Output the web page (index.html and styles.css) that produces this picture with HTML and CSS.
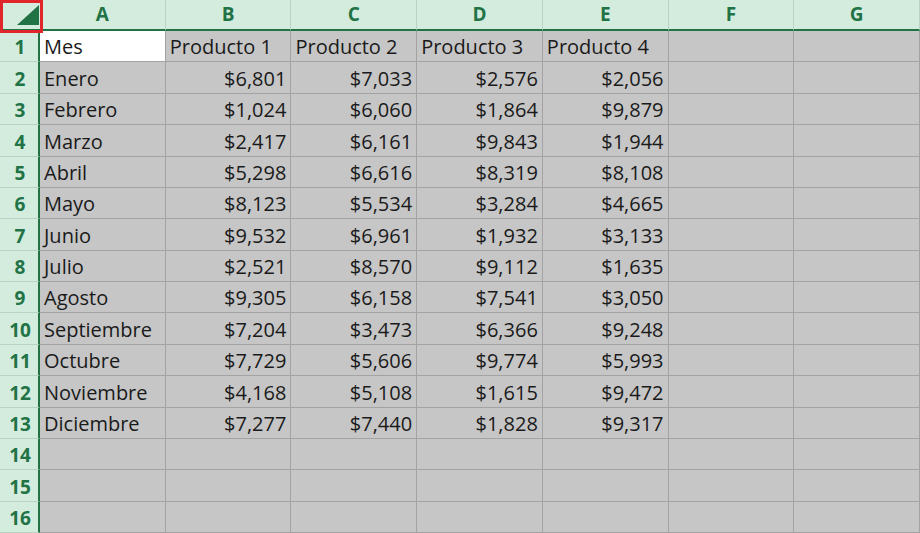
FILE: index.html
```html
<!DOCTYPE html>
<html lang="es">
<head>
<meta charset="utf-8">
<title>Hoja</title>
<link rel="stylesheet" href="styles.css">
</head>
<body>
<div class="sheet">
  <div class="corner">
    <svg class="tri" width="22" height="20" viewBox="0 0 22 20"><polygon points="0,20 22,20 22,0" fill="#217346"/></svg>
  </div>
  <div class="ch">A</div><div class="ch">B</div><div class="ch">C</div><div class="ch">D</div><div class="ch">E</div><div class="ch">F</div><div class="ch">G</div>

  <div class="rh">1</div><div class="c sel">Mes</div><div class="c">Producto 1</div><div class="c">Producto 2</div><div class="c">Producto 3</div><div class="c">Producto 4</div><div class="c"></div><div class="c"></div>
  <div class="rh">2</div><div class="c">Enero</div><div class="c n">$6,801</div><div class="c n">$7,033</div><div class="c n">$2,576</div><div class="c n">$2,056</div><div class="c"></div><div class="c"></div>
  <div class="rh">3</div><div class="c">Febrero</div><div class="c n">$1,024</div><div class="c n">$6,060</div><div class="c n">$1,864</div><div class="c n">$9,879</div><div class="c"></div><div class="c"></div>
  <div class="rh">4</div><div class="c">Marzo</div><div class="c n">$2,417</div><div class="c n">$6,161</div><div class="c n">$9,843</div><div class="c n">$1,944</div><div class="c"></div><div class="c"></div>
  <div class="rh">5</div><div class="c">Abril</div><div class="c n">$5,298</div><div class="c n">$6,616</div><div class="c n">$8,319</div><div class="c n">$8,108</div><div class="c"></div><div class="c"></div>
  <div class="rh">6</div><div class="c">Mayo</div><div class="c n">$8,123</div><div class="c n">$5,534</div><div class="c n">$3,284</div><div class="c n">$4,665</div><div class="c"></div><div class="c"></div>
  <div class="rh">7</div><div class="c">Junio</div><div class="c n">$9,532</div><div class="c n">$6,961</div><div class="c n">$1,932</div><div class="c n">$3,133</div><div class="c"></div><div class="c"></div>
  <div class="rh">8</div><div class="c">Julio</div><div class="c n">$2,521</div><div class="c n">$8,570</div><div class="c n">$9,112</div><div class="c n">$1,635</div><div class="c"></div><div class="c"></div>
  <div class="rh">9</div><div class="c">Agosto</div><div class="c n">$9,305</div><div class="c n">$6,158</div><div class="c n">$7,541</div><div class="c n">$3,050</div><div class="c"></div><div class="c"></div>
  <div class="rh">10</div><div class="c">Septiembre</div><div class="c n">$7,204</div><div class="c n">$3,473</div><div class="c n">$6,366</div><div class="c n">$9,248</div><div class="c"></div><div class="c"></div>
  <div class="rh">11</div><div class="c">Octubre</div><div class="c n">$7,729</div><div class="c n">$5,606</div><div class="c n">$9,774</div><div class="c n">$5,993</div><div class="c"></div><div class="c"></div>
  <div class="rh">12</div><div class="c">Noviembre</div><div class="c n">$4,168</div><div class="c n">$5,108</div><div class="c n">$1,615</div><div class="c n">$9,472</div><div class="c"></div><div class="c"></div>
  <div class="rh">13</div><div class="c">Diciembre</div><div class="c n">$7,277</div><div class="c n">$7,440</div><div class="c n">$1,828</div><div class="c n">$9,317</div><div class="c"></div><div class="c"></div>
  <div class="rh">14</div><div class="c"></div><div class="c"></div><div class="c"></div><div class="c"></div><div class="c"></div><div class="c"></div><div class="c"></div>
  <div class="rh">15</div><div class="c"></div><div class="c"></div><div class="c"></div><div class="c"></div><div class="c"></div><div class="c"></div><div class="c"></div>
  <div class="rh">16</div><div class="c"></div><div class="c"></div><div class="c"></div><div class="c"></div><div class="c"></div><div class="c"></div><div class="c"></div>
  <div class="mark"></div>
</div>
</body>
</html>
```
FILE: styles.css
```css
html, body {
  margin: 0;
  padding: 0;
  width: 920px;
  height: 533px;
  overflow: hidden;
  background: #c6c6c6;
}
.sheet {
  position: relative;
  display: grid;
  grid-template-columns: 40px repeat(7, 1fr);
  grid-template-rows: 31px repeat(16, 31.375px);
  width: 920px;
  font-family: "Open Sans", "Noto Sans", sans-serif;
  font-size: 20px;
  color: #1a1a1a;
}
.corner {
  background: #d4ecde;
  border-bottom: 2px solid #217346;
  position: relative;
}
.tri {
  position: absolute;
  left: 17px;
  top: 5px;
}
.ch {
  background: #d4ecde;
  border-bottom: 2px solid #217346;
  border-right: 1px solid #b9d3c3;
  color: #217346;
  font-weight: 700;
  font-size: 19px;
  text-align: center;
  line-height: 29px;
}
.rh {
  background: #d4ecde;
  border-right: 2px solid #217346;
  border-bottom: 1px solid #b9d3c3;
  color: #217346;
  font-weight: 700;
  font-size: 19px;
  display: flex;
  align-items: flex-end;
  justify-content: center;
  padding-bottom: 0;
  padding-left: 2px;
  line-height: 28px;
}
.c {
  background: #c6c6c6;
  border-right: 1px solid #a3a3a3;
  border-bottom: 1px solid #a3a3a3;
  display: flex;
  align-items: flex-end;
  padding: 0 4px 0 4px;
  line-height: 28px;
  white-space: nowrap;
  overflow: visible;
}
.c.n {
  justify-content: flex-end;
}
.c.sel {
  background: #ffffff;
}
.mark {
  position: absolute;
  left: 0;
  top: 0;
  width: 37px;
  height: 27px;
  border: 3px solid #e0262b;
}
```
